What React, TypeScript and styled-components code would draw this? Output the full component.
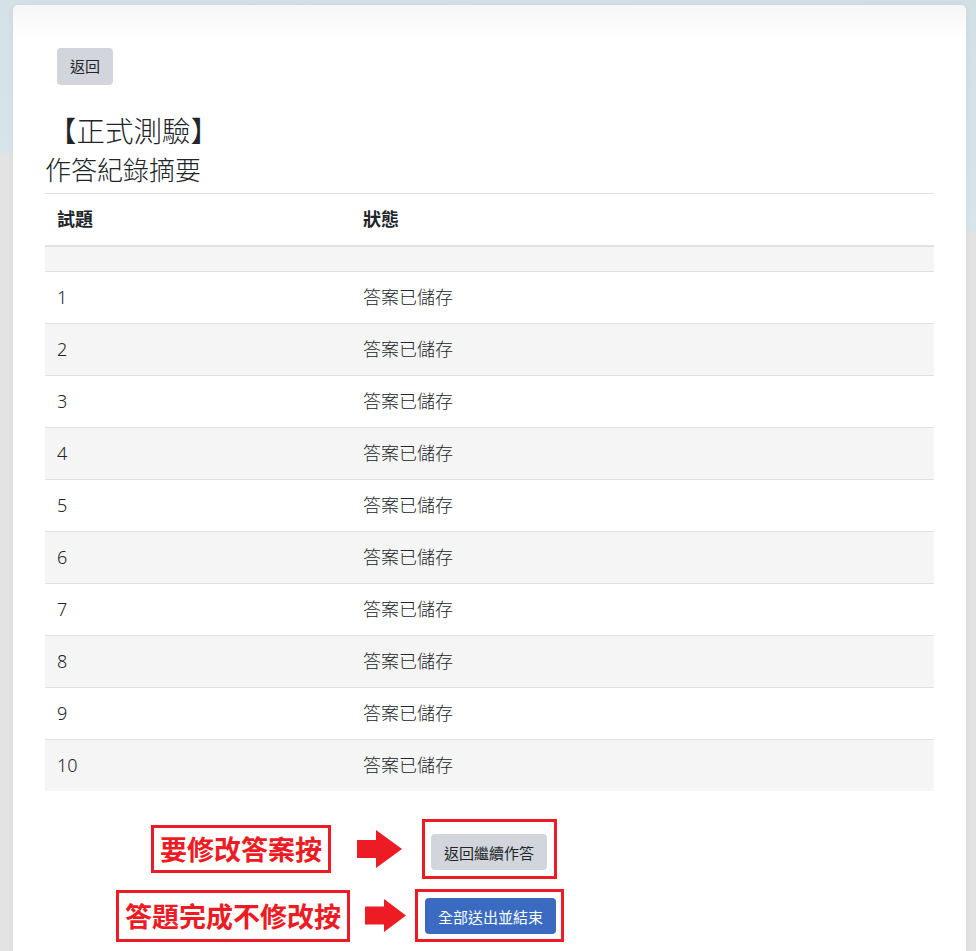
import React from 'react';
import styled, { createGlobalStyle } from 'styled-components';

const rows = Array.from({ length: 10 }, (_, i) => ({ no: i + 1, status: '答案已儲存' }));

const GlobalStyle = createGlobalStyle`
  html, body {
    margin: 0;
    padding: 0;
  }

  body {
    font-family: "Noto Sans", "Noto Sans CJK TC", sans-serif;
    color: #212529;
    background-color: #e3e3e3;
    background-image: linear-gradient(184.7deg, #d2e0e5 0px, #d7e4e9 232px, #e3e3e3 232px);
    background-attachment: fixed;
  }
`;

type ArrowProps = { width: number; height: number; shaft: number; shaftWidth: number };

const Arrow: React.FC<ArrowProps> = ({ width, height, shaft, shaftWidth }) => {
  const a = (height - shaft) / 2;
  const points = [
    `0,${a}`,
    `${shaftWidth},${a}`,
    `${shaftWidth},0`,
    `${width},${height / 2}`,
    `${shaftWidth},${height}`,
    `${shaftWidth},${height - a}`,
    `0,${height - a}`,
  ].join(' ');
  return (
    <svg width={width} height={height} viewBox={`0 0 ${width} ${height}`}>
      <polygon points={points} fill="#ed1c24" />
    </svg>
  );
};

const App: React.FC = () => {
  return (
    <>
      <GlobalStyle />
      <Page>
        <Card>
          <BackButton>返回</BackButton>
          <Title>【正式測驗】</Title>
          <SubTitle>作答紀錄摘要</SubTitle>

          <Table>
            <thead>
              <tr>
                <Th style={{ width: 282 }}>試題</Th>
                <Th>狀態</Th>
              </tr>
            </thead>
            <tbody>
              <Tr striped>
                <EmptyCell />
                <EmptyCell />
              </Tr>
              {rows.map((r) => (
                <Tr key={r.no} striped={r.no % 2 === 0}>
                  <Td>{r.no}</Td>
                  <Td>{r.status}</Td>
                </Tr>
              ))}
            </tbody>
          </Table>

          <Actions>
            <Frame pad="12px 7px 6px 6px">
              <Note gap={26} offset={23}>
                <NoteLabel lh={42}>要修改答案按</NoteLabel>
                <Arrow width={45} height={38} shaft={18} shaftWidth={19} />
              </Note>
              <ActionButton>返回繼續作答</ActionButton>
            </Frame>
            <Frame pad="6px 5px 5px 7px">
              <Note gap={15} offset={12}>
                <NoteLabel lh={46}>答題完成不修改按</NoteLabel>
                <Arrow width={41} height={33} shaft={18} shaftWidth={19} />
              </Note>
              <ActionButton primary>全部送出並結束</ActionButton>
            </Frame>
          </Actions>
        </Card>
      </Page>
    </>
  );
};

const Page = styled.div`
  padding: 5px 10px 0 13px;
  min-height: 100vh;
  box-sizing: border-box;
`;

const Card = styled.div`
  box-sizing: border-box;
  min-height: calc(100vh - 5px);
  padding: 43px 32px 20px 32px;
  background: linear-gradient(to bottom, #f6f6f6 0px, #ffffff 36px);
  border-radius: 5px 5px 0 0;
  box-shadow: 0 0 6px rgba(0, 0, 0, 0.06);
  display: flex;
  flex-direction: column;
  align-items: flex-start;
`;

const BackButton = styled.button`
  margin-left: 12px;
  font-family: inherit;
  font-size: 15px;
  line-height: 21px;
  padding: 8px 13px;
  border: none;
  border-radius: 4px;
  background: #d2d6dc;
  color: #212529;
`;

const Title = styled.h3`
  margin: 29px 0 0 0;
  padding-left: 3px;
  font-size: 28.5px;
  line-height: 34px;
  font-weight: 300;
  color: #212529;
`;

const SubTitle = styled.h4`
  margin: 6px 0 0 0;
  font-size: 26px;
  line-height: 32px;
  font-weight: 300;
  color: #212529;
`;

const Table = styled.table`
  margin-top: 7px;
  width: 100%;
  border-collapse: collapse;
  font-size: 18px;
  line-height: 27px;
`;

const Th = styled.th`
  text-align: left;
  font-weight: 700;
  padding: 12px;
  border-top: 1px solid #dee2e6;
  border-bottom: 2px solid #dee2e6;
`;

const Tr = styled.tr<{ striped?: boolean }>`
  background: ${(p) => (p.striped ? '#f5f5f5' : '#ffffff')};
`;

const Td = styled.td`
  padding: 12px;
  border-top: 1px solid #dee2e6;
  font-weight: 300;
`;

const EmptyCell = styled.td`
  padding: 0;
  height: 24px;
`;

const Actions = styled.div`
  align-self: stretch;
  margin-top: 28px;
  display: flex;
  flex-direction: column;
  align-items: center;
  gap: 10px;
`;

const Frame = styled.div<{ pad: string }>`
  position: relative;
  display: flex;
  padding: ${(p) => p.pad};
  border: 3px solid #ed1c24;
`;

const Note = styled.div<{ gap: number; offset: number }>`
  position: absolute;
  top: 50%;
  right: calc(100% + ${(p) => p.offset}px);
  transform: translateY(-50%);
  display: flex;
  align-items: center;
  gap: ${(p) => p.gap}px;
`;

const NoteLabel = styled.div<{ lh: number }>`
  white-space: nowrap;
  border: 3px solid #ed1c24;
  background: #ffffff;
  padding: 0 6px;
  font-family: "Noto Sans CJK TC", sans-serif;
  font-size: 27px;
  font-weight: 700;
  line-height: ${(p) => p.lh}px;
  color: #ed1c24;
`;

const ActionButton = styled.button<{ primary?: boolean }>`
  font-family: inherit;
  font-size: 15px;
  height: 36px;
  padding: 0 13px;
  border: none;
  border-radius: 4px;
  background: ${(p) => (p.primary ? '#3a6bc0' : '#d2d6dc')};
  color: ${(p) => (p.primary ? '#ffffff' : '#212529')};
`;

export default App;
